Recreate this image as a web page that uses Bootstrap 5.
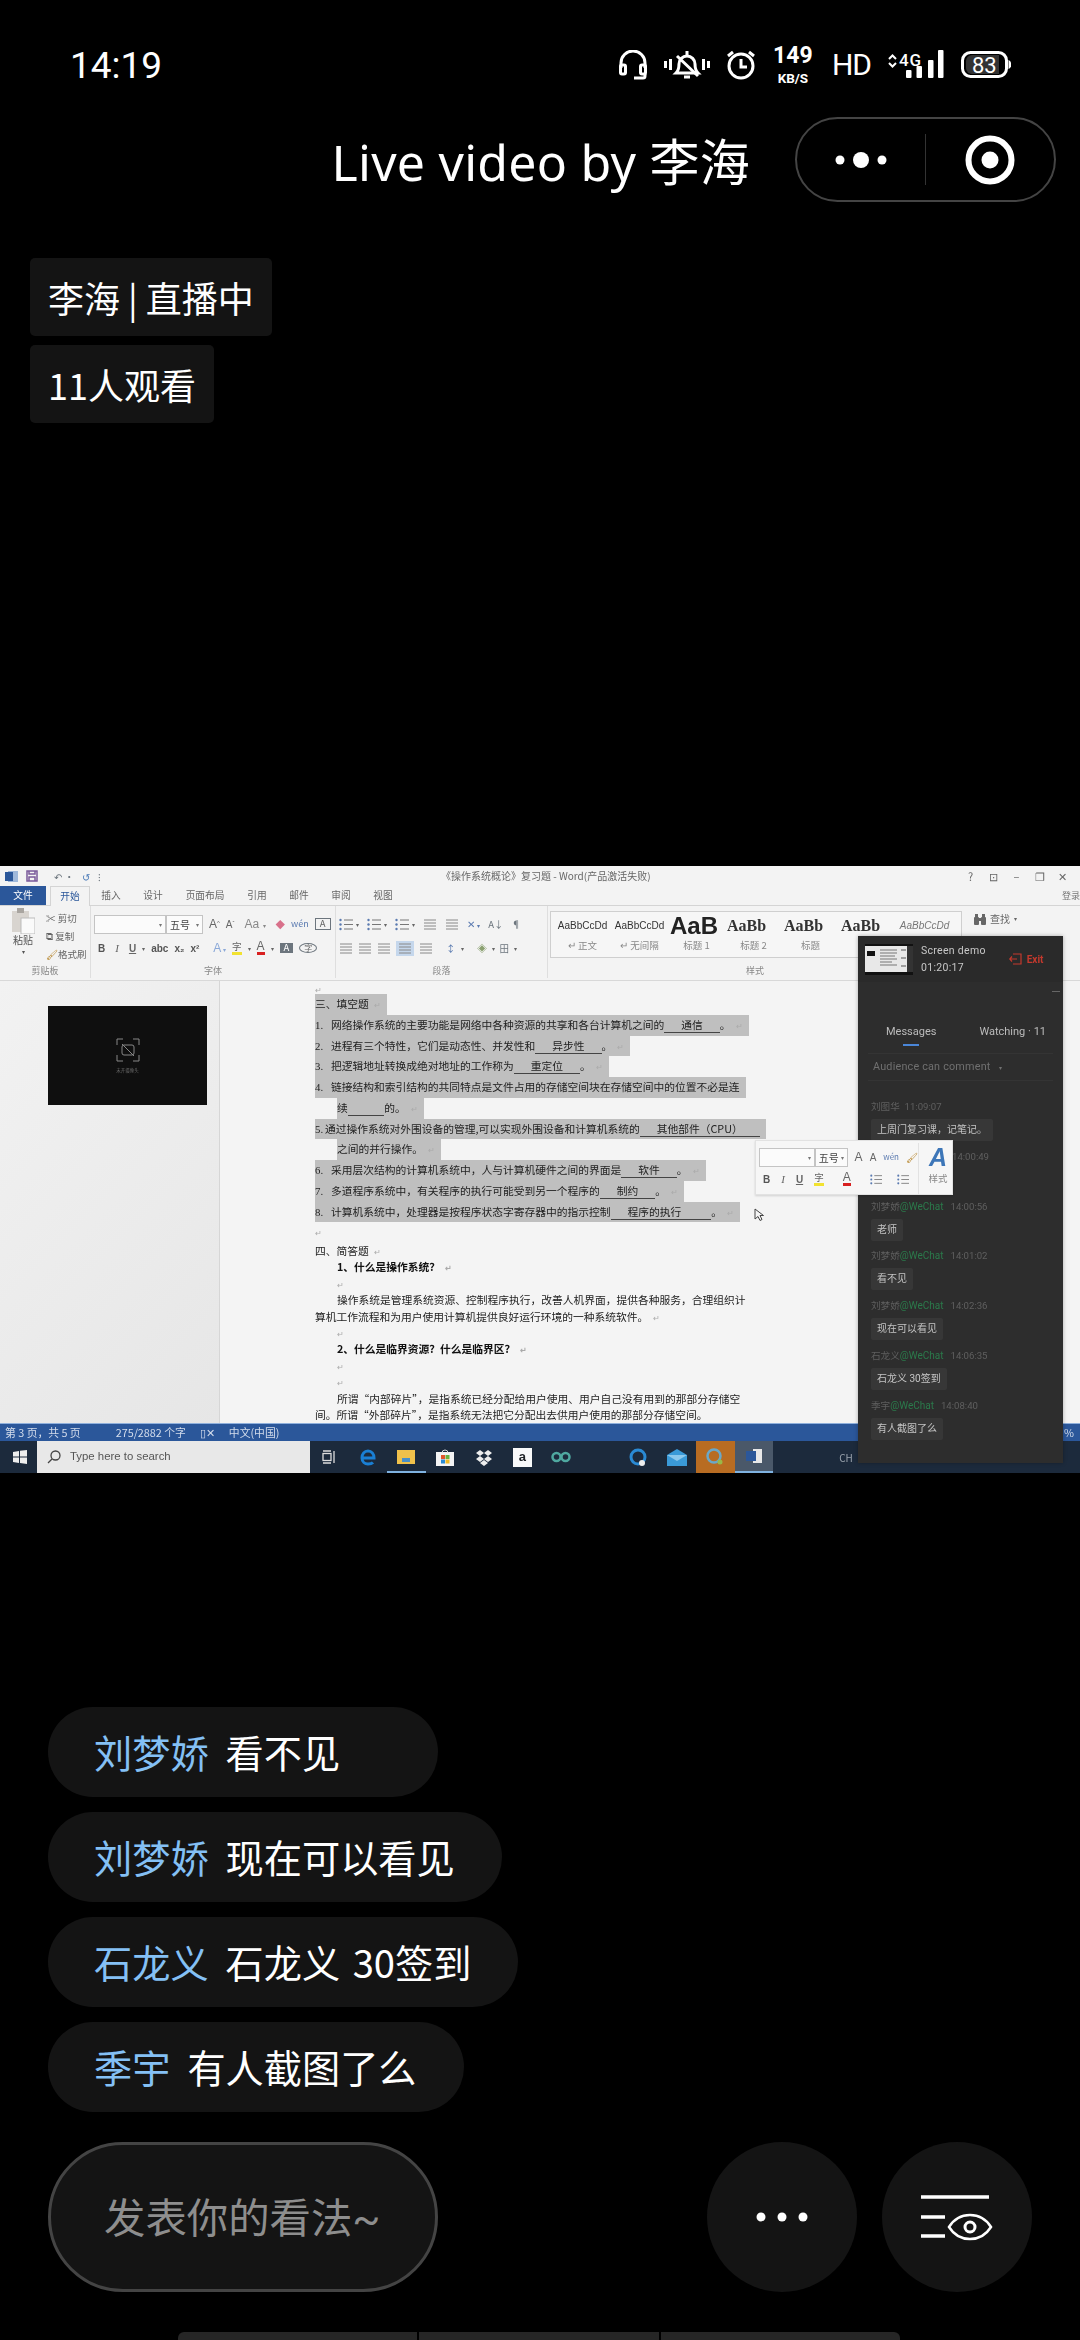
<!DOCTYPE html>
<html lang="zh">
<head>
  <meta charset="UTF-8">
  <title>Live video by 李海</title>
  <link rel="stylesheet" href="https://cdn.jsdelivr.net/npm/bootstrap@5.3.2/dist/css/bootstrap.min.css">
  <style>
    html, body { background: #000; margin: 0; width: 1080px; height: 2340px; overflow: hidden; }
    body { font-family: Roboto, "Noto Sans CJK SC", sans-serif; color: #fff; }
    .phone { width: 1080px; height: 2340px; overflow: hidden; background: #000; }

    /* status bar */
    .status-row { height: 90px; margin-top: 20px; padding: 0 69px 0 70px; }
    .clock-text { font-size: 37px; line-height: 1; }
    .stat-icons { gap: 17px; }
    .speed-box { width: 40px; line-height: 1; text-align: center; font-weight: 700; margin: 0 2px 0 1px; }
    .speed-num { font-size: 23px; }
    .speed-unit { font-size: 13.5px; margin-top: 5px; }
    .hd-text { font-size: 30px; line-height: 1; letter-spacing: -1px; }

    /* title */
    .title-row { height: 85px; margin-top: 7px; padding-right: 24px; }
    .page-title { font-family: "Noto Sans", "Noto Sans CJK SC", sans-serif; font-size: 50px; font-weight: 400; letter-spacing: .25px; margin: 0 45px 0 0; padding-top: 5px; line-height: 1; }
    .capsule { width: 261px; height: 85px; border: 2px solid #444; border-radius: 43px; }
    .capsule-sep { width: 1px; height: 51px; background: #333; }
    .capsule-cell { flex: 1 1 0; }

    /* live tags */
    .live-tags { margin: 56px 0 0 30px; gap: 9px; }
    .live-tag { height: 78px; padding: 0 18px; background: #141414; border-radius: 5px; font-size: 36px; font-family: "Noto Sans CJK SC", sans-serif; }

    /* shared video of a word window */
    .video-box { height: 607px; flex: none; margin-top: 443px; background: #f0f0f0; color: #333; filter: blur(.35px); overflow: hidden; font-family: "Noto Sans CJK SC", sans-serif; }
    .win-title { height: 20px; font-size: 10px; color: #666; padding: 0 5px; background: #f3f3f3; }
    .win-name { position: absolute; left: 441px; top: 0; line-height: 20px; white-space: nowrap; }
    .win-ctrl { gap: 10px; margin-left: auto; margin-right: 6px; font-size: 11px; }
    .win-ctrl span { width: 13px; text-align: center; }
    .tab-row { height: 20px; font-size: 9.7px; color: #666; border-bottom: 1px solid #d4d4d4; background: #f3f3f3; }
    .tab-file { width: 46px; background: #2b579a; color: #fff; }
    .tab-on { width: 40px; margin-left: 4px; height: 20px; background: #f3f3f3; border: 1px solid #d4d4d4; border-bottom: 0; color: #2b579a; }
    .tab-item { width: 42px; }
    .tab-wide { width: 62px; }
    .tab-login { margin-left: auto; font-size: 9px; color: #777; white-space: nowrap; }

    .ribbon { height: 75px; background: #f3f3f3; border-bottom: 1px solid #d8d8d8; font-size: 9.5px; color: #666; }
    .rb-group { flex: none; border-right: 1px solid #dedede; position: relative; height: 72px; padding-top: 2px; }
    .rb-label { position: absolute; left: 0; right: 0; bottom: 1px; text-align: center; font-size: 9px; line-height: 12px; color: #888; }
    .rb-clip { width: 91px; }
    .rb-font { width: 245px; }
    .rb-para { width: 212px; }
    .rb-style { width: 414px; border-right: 0; padding-left: 2px; }
    .rb-row { height: 24px; gap: 6px; padding-left: 3px; white-space: nowrap; }
    .fake-input { background: #fbfbfb; border: 1px solid #c4c4c4; height: 19px; font-size: 10px; color: #444; padding: 0 3px; }
    .fake-name { width: 72px; }
    .fake-size { width: 37px; margin-left: -6px; }
    .mini-caret { margin-left: auto; font-size: 6px; color: #777; }
    .paste-col { width: 30px; font-size: 10px; line-height: 12px; color: #555; }
    .cut-col { font-size: 9.5px; line-height: 18px; color: #666; margin-top: 1px; }
    .fmt-b { font-weight: 700; color: #555; font-family: "Liberation Sans", sans-serif; font-size: 10px; }
    .fmt-i { font-style: italic; font-family: "Liberation Serif", serif; font-size: 11px; }
    .fmt-u { text-decoration: underline; font-family: "Liberation Sans", sans-serif; font-weight: 700; font-size: 10px; }
    .fmt-big { font-size: 12px; font-family: "Liberation Sans", sans-serif; }
    .bar-yellow { border-bottom: 3px solid #f2e230; line-height: 11px; }
    .bar-red { border-bottom: 3px solid #d82020; line-height: 11px; }
    .para-on { background: #c5d7ec; padding: 1px 2px; }
    .style-gallery { width: 412px; height: 47px; margin-top: 3px; border: 1px solid #cfcfcf; background: #f6f6f6; padding: 0 12px 0 3px; }
    .style-cell { width: 57px; flex: none; overflow: hidden; text-align: center; }
    .style-sample { height: 27px; line-height: 27px; white-space: nowrap; font-family: "Liberation Sans", sans-serif; font-size: 10px; color: #333; }
    .style-h1 { width: 49px; overflow: hidden; font-size: 24px; font-weight: 700; color: #222; text-align: left; padding-left: 2px; }
    .style-h2 { width: 49px; overflow: hidden; font-size: 16px; font-weight: 700; font-family: "Liberation Serif", serif; color: #333; text-align: left; padding-left: 2px; }
    .style-em { font-style: italic; color: #777; }
    .style-name { font-size: 9.5px; line-height: 13px; color: #888; }
    .find-col { padding: 4px 0 0 12px; font-size: 10px; line-height: 18px; color: #666; }

    .work-area { height: 442px; }
    .nav-pane { width: 220px; flex: none; background: linear-gradient(135deg, #f2f2f2, #e6e6e6); border-right: 1px solid #d6d6d6; padding: 25px 0 0 48px; }
    .slide-thumb { width: 159px; height: 99px; background: #0f0f0f; color: #666; font-size: 4.5px; gap: 5px; }
    .doc-pane { flex: 1 1 auto; background: #f4f4f4; padding: 0 0 0 95px; overflow: hidden; font-size: 10.75px; color: #222; white-space: nowrap; }
    .doc-mark { height: 13px; }
    .doc-big { height: 20.75px; line-height: 20.75px; }
    .doc-small { height: 16.42px; line-height: 16.42px; }
    .sel { display: inline-block; height: 100%; background: #bfbfbf; padding-right: 6px; }
    .indent { margin-left: 22px; }
    .num { display: inline-block; width: 16px; font-family: "Liberation Serif", serif; }
    .num-tight { display: inline-block; width: 10px; font-family: "Liberation Serif", serif; }
    .blank { border-bottom: 1px solid #444; padding: 0 17px; }
    .blank-wide { padding: 0 30px 0 17px; }
    .para-mark { color: #aaa; font-size: 8px; margin-left: 5px; }
    .ink-bold { font-weight: 700; color: #111; }

    .word-status { height: 18px; background: #2b579a; color: #d4ddec; font-size: 10.8px; padding: 0 6px 0 5px; gap: 35px; border-top: 1px solid #8fb0dc; }
    .pct-text { margin-left: auto; }
    .task-bar { height: 32px; background: #1c2a3c; padding-left: 3px; }
    .win-start { width: 34px; flex: none; }
    .task-search { width: 273px; height: 32px; flex: none; background: #e8e8e8; color: #555; font-size: 11.4px; font-family: "Liberation Sans", sans-serif; padding-left: 10px; gap: 9px; }
    .task-cell { width: 38.6px; height: 32px; flex: none; }
    .task-open { border-bottom: 2px solid #7fb2e0; }
    .task-orange { background: #b86c22; }
    .task-word { background: #4a5869; }
    .task-right { color: #9aa3ad; font-size: 10px; padding-left: 66px; }

    /* floating comment panel over the video */
    .share-panel { position: absolute; left: 858px; top: 70px; width: 205px; height: 527px; background: #2d2d2d; color: #c8c8c8; font-size: 10px; font-family: Roboto, "Noto Sans CJK SC", sans-serif; box-shadow: 0 0 4px rgba(0,0,0,.3); }
    .panel-head { height: 46px; padding: 0 0 0 7px; background: #2a2a2a; gap: 8px; }
    .panel-info { font-size: 10.5px; line-height: 17px; letter-spacing: .3px; }
    .panel-exit { color: #c4392d; margin-left: 15px; gap: 5px; font-weight: 700; }
    .panel-dash { width: 8px; height: 1px; background: #666; margin: 9px 3px 0 auto; }
    .panel-tabs { margin-top: 32px; height: 20px; padding: 0 17px 0 28px; font-size: 11px; color: #bbb; justify-content: space-between; }
    .tab-mark::after { content: ""; display: block; width: 16px; height: 2px; background: #4a86d8; margin: 3px auto 0; }
    .panel-mode { height: 28px; margin: 9px 10px 0; border-top: 1px solid #343434; border-bottom: 1px solid #343434; color: #707070; font-size: 10.8px; padding-left: 5px; letter-spacing: .2px; }
    .chat-list { padding: 19px 0 0 13px; }
    .chat-item { height: 49.8px; }
    .chat-meta { line-height: 14px; font-size: 9.6px; color: #5f5f5f; white-space: nowrap; }
    .chat-src { color: #2b7a4b; margin-right: 7px; font-size: 10px; }
    .chat-hidden { padding-left: 81px; }
    .chat-bubble { height: 22px; line-height: 22px; margin-top: 5px; padding: 0 6px; background: #373737; color: #c4c4c4; border-radius: 2px; white-space: nowrap; }

    .mini-bar { position: absolute; left: 755px; top: 274px; width: 198px; height: 55px; background: #f6f6f6; border: 1px solid #e2e2e2; box-shadow: 0 1px 2px rgba(0,0,0,.15); color: #666; font-size: 9.5px; }
    .mini-left { width: 162px; padding: 5px 0 0 3px; }
    .mini-row { height: 22px; gap: 7px; }
    .mini-row-low { gap: 11px; }
    .mini-right { border-left: 1px solid #e2e2e2; margin-top: 2px; padding-left: 5px; flex: 1; font-size: 9.5px; color: #888; }
    .mini-a { color: #3d76b8; font-size: 25px; line-height: 28px; font-style: italic; font-weight: 700; font-family: "Liberation Sans", sans-serif; }
    .mouse-arrow { position: absolute; left: 754px; top: 342px; }

    /* comments */
    .comment-list { margin: 234px 0 0 48px; gap: 15px; font-family: "Noto Sans CJK SC", sans-serif; }
    .comment-pill { height: 90px; min-width: 390px; padding: 0 47px 0 46px; background: #141414; border-radius: 45px; font-size: 38.2px; gap: 17px; word-spacing: 4px; }
    .comment-name { color: #84c0f5; }

    /* bottom */
    .action-row { margin-top: 30px; padding: 0 48px; }
    .say-box { width: 390px; height: 150px; background: #141414; border: 3px solid #444; border-radius: 75px; padding: 5px 0 0 53px; color: #8e8e8e; font-size: 41.4px; font-family: Roboto, "Noto Sans CJK SC", sans-serif; }
    .round-btn { width: 150px; height: 150px; background: #141414; border-radius: 50%; }
    .round-gap { gap: 25px; margin-left: auto; }
    .home-bar { margin: 40px 180px 0 178px; height: 8px; gap: 2px; }
    .home-seg { flex: 1 1 0; background: #262626; }
    .home-seg:first-child { border-top-left-radius: 6px; }
    .home-seg:last-child { border-top-right-radius: 6px; }
  </style>
</head>
<body>
<div class="phone d-flex flex-column position-relative">

  <svg width="0" height="0" class="position-absolute">
    <symbol id="ic-list" viewBox="0 0 14 13"><g fill="none" stroke="#777"><path d="M5 2h9M5 6.500h9M5 11h9"/></g><g fill="#5a7ab0"><circle cx="1.500" cy="2" r="1.200"/><circle cx="1.500" cy="6.500" r="1.200"/><circle cx="1.500" cy="11" r="1.200"/></g></symbol>
    <symbol id="ic-lines" viewBox="0 0 14 13"><path d="M1 2h12M1 5h12M1 8h12M1 11h12" fill="none" stroke="#888"/></symbol>
  </svg>

  <!-- status bar -->
  <div class="status-row d-flex align-items-center justify-content-between">
    <span class="clock-text">14:19</span>
    <div class="stat-icons d-flex align-items-center">
      <svg width="28" height="30" viewBox="0 0 28 30" fill="none" stroke="#fff" stroke-width="3"><path d="M2 18V13a12 12 0 0 1 24 0v5"/><rect x="1.500" y="15" width="5" height="9" rx="1.500"/><rect x="21.500" y="15" width="5" height="9" rx="1.500"/><path d="M26 24v2a2 2 0 0 1-2 2H15"/></svg>
      <svg width="46" height="30" viewBox="0 0 46 30" fill="none" stroke="#fff" stroke-width="3"><path d="M1.500 11v7M6.500 9v11M39.500 9v11M44.500 11v7"/><path d="M12 23c2-2 3-4 3-9a8 8 0 0 1 16 0c0 5 1 7 3 9z"/><path d="M23 1v4M20 27h6M13 6l21 20"/></svg>
      <svg width="28" height="30" viewBox="0 0 28 30" fill="none" stroke="#fff" stroke-width="3"><circle cx="14" cy="16" r="12"/><path d="M14 9v8h6M1 6l5-4M27 6l-5-4"/></svg>
      <div class="speed-box"><div class="speed-num">149</div><div class="speed-unit">KB/S</div></div>
      <span class="hd-text">HD</span>
      <svg width="56" height="30" viewBox="0 0 56 30" fill="none"><path d="M1 9l3.500-3.500L8 9M1 13l3.500 3.500L8 13" stroke="#fff" stroke-width="2"/><text x="11" y="16" fill="#fff" font-family="Roboto" font-size="17" font-weight="500" textLength="22">4G</text><rect x="18" y="20" width="5.500" height="8" rx="1" fill="#fff"/><rect x="28.500" y="16" width="5.500" height="12" rx="1" fill="#fff"/><rect x="40" y="10" width="5.500" height="18" rx="1" fill="#fff"/><rect x="50" y="0" width="5.500" height="28" rx="1" fill="#fff"/></svg>
      <svg width="50" height="30" viewBox="0 0 50 30"><rect x="1.500" y="2.500" width="44" height="24" rx="8" fill="none" stroke="#fff" stroke-width="3"/><path d="M11 5h27v19H11a6 6 0 0 1-6-6v-7a6 6 0 0 1 6-6z" fill="#333"/><path d="M47.500 10a5 5 0 0 1 0 9z" fill="#fff"/><text x="11" y="23" fill="#fff" font-family="Roboto" font-size="22">83</text></svg>
    </div>
  </div>

  <!-- title and capsule -->
  <div class="title-row d-flex align-items-center justify-content-end">
    <h1 class="page-title">Live video by 李海</h1>
    <div class="capsule d-flex align-items-center">
      <div class="capsule-cell d-flex justify-content-center">
        <svg width="60" height="18" viewBox="0 0 60 18" fill="#fff"><circle cx="9" cy="9" r="4.500"/><circle cx="30" cy="9" r="8"/><circle cx="51" cy="9" r="4.500"/></svg>
      </div>
      <div class="capsule-sep"></div>
      <div class="capsule-cell d-flex justify-content-center">
        <svg width="50" height="50" viewBox="0 0 50 50"><circle cx="25" cy="25" r="21.500" fill="none" stroke="#fff" stroke-width="6"/><circle cx="25" cy="25" r="8.500" fill="#fff"/></svg>
      </div>
    </div>
  </div>

  <!-- live tags -->
  <div class="live-tags d-flex flex-column align-items-start">
    <div class="live-tag d-flex align-items-center">李海 | 直播中</div>
    <div class="live-tag d-flex align-items-center">11人观看</div>
  </div>

  <!-- shared screen -->
  <div class="video-box position-relative">
    <div class="win-title d-flex align-items-center gap-2 position-relative">
      <svg width="13" height="13" viewBox="0 0 13 13"><rect x="3" y="1" width="10" height="11" fill="#9fb8da"/><rect y="2" width="8" height="9" fill="#2b579a"/></svg>
      <svg width="12" height="12" viewBox="0 0 12 12" fill="none" stroke="#7a5a9a" stroke-width="1.500"><rect x="1" y="1" width="10" height="10"/><path d="M3 1v3h6V1M3 11V7h6v4"/></svg>
      <span class="text-secondary ms-2">↶ ·</span>
      <span style="color:#4a7ab8">↺</span>
      <span class="text-secondary">⁝</span>
      <span class="win-name">《操作系统概论》复习题 - Word(产品激活失败)</span>
      <div class="win-ctrl d-flex">
        <span>?</span><span>⊡</span><span>–</span><span>❐</span><span>✕</span>
      </div>
    </div>
    <div class="tab-row d-flex align-items-center">
      <div class="tab-file d-flex align-items-center justify-content-center h-100">文件</div>
      <div class="tab-on d-flex align-items-center justify-content-center">开始</div>
      <div class="tab-item text-center">插入</div>
      <div class="tab-item text-center">设计</div>
      <div class="tab-wide text-center">页面布局</div>
      <div class="tab-item text-center">引用</div>
      <div class="tab-item text-center">邮件</div>
      <div class="tab-item text-center">审阅</div>
      <div class="tab-item text-center">视图</div>
      <div class="tab-login">登录</div>
    </div>

    <div class="ribbon d-flex">
      <div class="rb-group rb-clip d-flex gap-2 ps-2">
        <div class="paste-col text-center">
          <svg width="24" height="26" viewBox="0 0 24 26"><rect x="1" y="3" width="17" height="21" fill="#d8d4cf"/><rect x="6" y="0" width="7" height="5" fill="#a9a5a0"/><rect x="10" y="10" width="14" height="16" fill="#fafafa" stroke="#bbb"/></svg>
          <div>粘贴</div><div style="font-size:6px">▾</div>
        </div>
        <div class="cut-col">
          <div>✂ 剪切</div><div>⧉ 复制</div><div><span style="color:#b98a35">🖌</span>格式刷</div>
        </div>
        <div class="rb-label">剪贴板</div>
      </div>

      <div class="rb-group rb-font">
        <div class="rb-row d-flex align-items-center mt-1">
          <div class="fake-input fake-name d-flex align-items-center"><span class="mini-caret">▾</span></div>
          <div class="fake-input fake-size d-flex align-items-center">五号<span class="mini-caret">▾</span></div>
          <span class="fmt-big">A<sup style="font-size:6px">^</sup></span>
          <span class="fmt-big" style="font-size:10px">A<sup style="font-size:6px">ˇ</sup></span>
          <span class="fmt-big ms-1" style="color:#888">Aa <small style="font-size:6px">▾</small></span>
          <span class="ms-1" style="color:#d8708a">◆</span>
          <span style="color:#5a7ab0;font-size:9px">wén</span>
          <span class="border border-secondary px-1 lh-1">A</span>
        </div>
        <div class="rb-row d-flex align-items-center">
          <span class="fmt-b ms-1">B</span><span class="fmt-i ms-1">I</span><span class="fmt-u ms-1">U</span>
          <span style="font-size:6px">▾</span><span class="fmt-b">abc</span><span class="fmt-b">x₂</span><span class="fmt-b">x²</span>
          <span class="fmt-big ms-2" style="color:#8aa8d8">A<small style="font-size:6px"> ▾</small></span>
          <span class="bar-yellow">字</span><span style="font-size:6px">▾</span>
          <span class="bar-red fmt-big">A</span><span style="font-size:6px">▾</span>
          <span class="bg-secondary text-white lh-1 px-1">A</span>
          <span class="border border-secondary rounded-circle lh-1 px-1" style="font-size:8px">字</span>
        </div>
        <div class="rb-label">字体</div>
      </div>

      <div class="rb-group rb-para">
        <div class="rb-row d-flex align-items-center mt-1" style="gap:8px">
          <svg width="14" height="13"><use href="#ic-list"/></svg><span style="font-size:6px;margin-left:-5px">▾</span>
          <svg width="14" height="13"><use href="#ic-list"/></svg><span style="font-size:6px;margin-left:-5px">▾</span>
          <svg width="14" height="13"><use href="#ic-list"/></svg><span style="font-size:6px;margin-left:-5px">▾</span>
          <svg width="14" height="13"><use href="#ic-lines"/></svg>
          <svg width="14" height="13"><use href="#ic-lines"/></svg>
          <span style="color:#5a7ab0">✕ <small style="font-size:6px">▾</small></span>
          <span class="text-secondary">A↓</span>
          <span class="text-secondary">¶</span>
        </div>
        <div class="rb-row d-flex align-items-center" style="gap:5px">
          <svg width="14" height="13"><use href="#ic-lines"/></svg>
          <svg width="14" height="13"><use href="#ic-lines"/></svg>
          <svg width="14" height="13"><use href="#ic-lines"/></svg>
          <span class="para-on d-flex"><svg width="14" height="13"><use href="#ic-lines"/></svg></span>
          <svg width="14" height="13"><use href="#ic-lines"/></svg>
          <span class="ms-2" style="color:#5a7ab0">↕</span><span style="font-size:6px">▾</span>
          <span class="ms-2" style="color:#8aa070">◈</span><span style="font-size:6px">▾</span>
          <span class="text-secondary">田</span><span style="font-size:6px">▾</span>
        </div>
        <div class="rb-label">段落</div>
      </div>

      <div class="rb-group rb-style">
        <div class="style-gallery d-flex">
          <div class="style-cell"><div class="style-sample">AaBbCcDd</div><div class="style-name">↵ 正文</div></div>
          <div class="style-cell"><div class="style-sample">AaBbCcDd</div><div class="style-name">↵ 无间隔</div></div>
          <div class="style-cell"><div class="style-sample style-h1">AaB</div><div class="style-name">标题 1</div></div>
          <div class="style-cell"><div class="style-sample style-h2">AaBb</div><div class="style-name">标题 2</div></div>
          <div class="style-cell"><div class="style-sample style-h2">AaBb</div><div class="style-name">标题</div></div>
          <div class="style-cell"><div class="style-sample style-h2">AaBb</div></div>
          <div class="style-cell"><div class="style-sample style-em">AaBbCcDd</div></div>
        </div>
        <div class="rb-label">样式</div>
      </div>

      <div class="find-col">
        <div class="d-flex align-items-center gap-1"><svg width="12" height="11" viewBox="0 0 12 11" fill="#666"><rect y="3" width="5" height="8" rx="1"/><rect x="7" y="3" width="5" height="8" rx="1"/><rect x="1" width="3" height="4"/><rect x="8" width="3" height="4"/><rect x="4" y="4" width="4" height="3"/></svg><span>查找</span><small style="font-size:6px">▾</small></div>
      </div>
    </div>

    <div class="work-area d-flex">
      <div class="nav-pane">
        <div class="slide-thumb d-flex flex-column align-items-center justify-content-center">
          <svg width="24" height="24" viewBox="0 0 24 24" fill="none" stroke="#888"><path d="M1 7V1h6M17 1h6v6M23 17v6h-6M7 23H1v-6"/><rect x="6" y="7" width="12" height="10" rx="2"/><path d="M6 6l12 12"/></svg>
          <span>未开摄像头</span>
        </div>
      </div>
      <div class="doc-pane">
        <div class="doc-mark"><span class="para-mark ms-0">↵</span></div>
        <div class="doc-big"><span class="sel">三、填空题<span class="para-mark">↵</span></span></div>
        <div class="doc-big"><span class="sel"><span class="num">1.</span>网络操作系统的主要功能是网络中各种资源的共享和各台计算机之间的<span class="blank">通信</span>。<span class="para-mark">↵</span></span></div>
        <div class="doc-big"><span class="sel"><span class="num">2.</span>进程有三个特性&#xFF0C;它们是动态性、并发性和<span class="blank">异步性</span>。<span class="para-mark">↵</span></span></div>
        <div class="doc-big"><span class="sel"><span class="num">3.</span>把逻辑地址转换成绝对地址的工作称为<span class="blank">重定位</span>。<span class="para-mark">↵</span></span></div>
        <div class="doc-big"><span class="sel"><span class="num">4.</span>链接结构和索引结构的共同特点是文件占用的存储空间块在存储空间中的位置不必是连</span></div>
        <div class="doc-big"><span class="sel indent">续<span class="blank">&nbsp;</span>的。<span class="para-mark">↵</span></span></div>
        <div class="doc-big"><span class="sel"><span class="num-tight">5.</span>通过操作系统对外围设备的管理,可以实现外围设备和计算机系统的<span class="blank">其他部件&#xFF08;CPU&#xFF09;</span></span></div>
        <div class="doc-big"><span class="sel indent">之间的并行操作。<span class="para-mark">↵</span></span></div>
        <div class="doc-big"><span class="sel"><span class="num">6.</span>采用层次结构的计算机系统中&#xFF0C;人与计算机硬件之间的界面是<span class="blank">软件</span>。<span class="para-mark">↵</span></span></div>
        <div class="doc-big"><span class="sel"><span class="num">7.</span>多道程序系统中&#xFF0C;有关程序的执行可能受到另一个程序的<span class="blank">制约</span>。<span class="para-mark">↵</span></span></div>
        <div class="doc-big"><span class="sel"><span class="num">8.</span>计算机系统中&#xFF0C;处理器是按程序状态字寄存器中的指示控制<span class="blank blank-wide">程序的执行</span>。<span class="para-mark">↵</span></span></div>
        <div class="doc-big"><span class="para-mark ms-0">↵</span></div>
        <div class="doc-small">四、简答题<span class="para-mark">↵</span></div>
        <div class="doc-small indent ink-bold">1、什么是操作系统&#xFF1F;<span class="para-mark">↵</span></div>
        <div class="doc-small indent"><span class="para-mark ms-0">↵</span></div>
        <div class="doc-small indent">操作系统是管理系统资源、控制程序执行&#xFF0C;改善人机界面&#xFF0C;提供各种服务&#xFF0C;合理组织计</div>
        <div class="doc-small">算机工作流程和为用户使用计算机提供良好运行环境的一种系统软件。<span class="para-mark">↵</span></div>
        <div class="doc-small indent"><span class="para-mark ms-0">↵</span></div>
        <div class="doc-small indent ink-bold">2、什么是临界资源&#xFF1F;什么是临界区&#xFF1F;<span class="para-mark">↵</span></div>
        <div class="doc-small indent"><span class="para-mark ms-0">↵</span></div>
        <div class="doc-small indent"><span class="para-mark ms-0">↵</span></div>
        <div class="doc-small indent">所谓“内部碎片”&#xFF0C;是指系统已经分配给用户使用、用户自己没有用到的那部分存储空</div>
        <div class="doc-small">间。所谓“外部碎片”&#xFF0C;是指系统无法把它分配出去供用户使用的那部分存储空间。</div>
      </div>
    </div>

    <div class="word-status d-flex align-items-center">
      <span>第 3 页&#xFF0C;共 5 页</span>
      <span>275/2882 个字</span>
      <span style="margin-left:-21px">▯✕</span>
      <span style="margin-left:-21px">中文(中国)</span>
      <span class="pct-text">%</span>
    </div>

    <div class="task-bar d-flex align-items-center">
      <div class="win-start d-flex justify-content-center">
        <svg width="14" height="14" viewBox="0 0 14 14" fill="#eee"><path d="M0 2l6-1v5.500H0zM7 .8L14 0v6.500H7zM0 7.500h6V13l-6-1zM7 7.500h7V14l-7-1z"/></svg>
      </div>
      <div class="task-search d-flex align-items-center">
        <svg width="14" height="14" viewBox="0 0 14 14" fill="none" stroke="#444" stroke-width="1.300"><circle cx="8.500" cy="5.500" r="4.500"/><path d="M5 9l-4 4"/></svg>
        <span>Type here to search</span>
      </div>
      <div class="task-cell d-flex align-items-center justify-content-center"><svg width="14" height="14" fill="none" stroke="#ddd" stroke-width="1.300"><rect x="1" y="3.500" width="8" height="7"/><path d="M1 1h8M1 13h8M12 1v12"/></svg></div>
      <div class="task-cell d-flex align-items-center justify-content-center"><svg width="16" height="17" viewBox="0 0 16 17" fill="none" stroke="#1a7fd4" stroke-width="3"><path d="M2 9h12c0-4-2.500-7-6-7S2 5 2 9c0 4 3 6 6 6 2 0 4-.5 5-1.500"/></svg></div>
      <div class="task-cell task-open d-flex align-items-center justify-content-center"><svg width="18" height="15"><rect y="1" width="18" height="14" fill="#f0c14b"/><rect x="5" y="9" width="8" height="4" fill="#4a90c8"/></svg></div>
      <div class="task-cell d-flex align-items-center justify-content-center"><svg width="18" height="18"><rect y="4" width="18" height="14" fill="#f4f4f4"/><path d="M6 5a3 3 0 0 1 6 0" fill="none" stroke="#ddd"/><rect x="5" y="7" width="4" height="4" fill="#e2552b"/><rect x="9.500" y="7" width="4" height="4" fill="#6cb33e"/><rect x="5" y="11.500" width="4" height="4" fill="#2a8ad4"/><rect x="9.500" y="11.500" width="4" height="4" fill="#f0b923"/></svg></div>
      <div class="task-cell d-flex align-items-center justify-content-center"><svg width="18" height="17" viewBox="0 0 18 17" fill="#eee"><path d="M5 1l4 3-4 3-4-3zM13 1l4 3-4 3-4-3zM5 7l4 3-4 3-4-3zM13 7l4 3-4 3-4-3zM5 14l4-3 4 3-4 3z"/></svg></div>
      <div class="task-cell d-flex align-items-center justify-content-center"><span class="bg-light text-dark d-flex align-items-center justify-content-center fw-bold" style="width:19px;height:19px;font-size:13px;font-family:'Liberation Sans'">a</span></div>
      <div class="task-cell d-flex align-items-center justify-content-center"><svg width="20" height="12" fill="none" stroke="#4fa8a0" stroke-width="2.500"><circle cx="5.500" cy="6" r="4"/><circle cx="14.500" cy="6" r="4"/></svg></div>
      <div class="task-cell"></div>
      <div class="task-cell d-flex align-items-center justify-content-center"><svg width="18" height="19" fill="none" stroke="#2a8ad4" stroke-width="3"><circle cx="9" cy="9" r="7"/><circle cx="13" cy="15" r="3" fill="#eee" stroke="none"/></svg></div>
      <div class="task-cell d-flex align-items-center justify-content-center"><svg width="20" height="17" viewBox="0 0 20 17"><path d="M0 6l10-6 10 6v11H0z" fill="#3a9ad8"/><path d="M0 6l10 6 10-6" fill="#8cc8ec"/></svg></div>
      <div class="task-cell task-orange d-flex align-items-center justify-content-center"><svg width="20" height="20" fill="none" stroke-width="2.500"><circle cx="9" cy="9" r="6.500" stroke="#6aa8c8"/><circle cx="15" cy="15" r="2.500" fill="#9ab848"/></svg></div>
      <div class="task-cell task-word task-open d-flex align-items-center justify-content-center"><svg width="16" height="14"><rect x="7" width="9" height="14" fill="#e8e8e8"/><rect y="2" width="10" height="10" fill="#2b579a"/></svg></div>
      <div class="task-right">CH</div>
    </div>

    <!-- screen share panel -->
    <div class="share-panel">
      <div class="panel-head d-flex align-items-center">
        <svg width="48" height="31" viewBox="0 0 48 31"><rect width="48" height="31" fill="#e8e8e8"/><rect width="48" height="2" fill="#111"/><rect y="28" width="48" height="3" fill="#111"/><rect x="2" y="7" width="8" height="5" fill="#111"/><path d="M15 6h17M15 9h17M15 12h15M15 15h17M15 18h12M15 21h17" stroke="#777"/><path d="M36 6h5M36 14h5M36 22h5" stroke="#555"/><rect x="42" y="2" width="6" height="26" fill="#333"/></svg>
        <div class="panel-info"><div>Screen demo</div><div>01:20:17</div></div>
        <div class="panel-exit d-flex align-items-center">
          <svg width="13" height="12" viewBox="0 0 13 12" fill="none" stroke="#c4392d" stroke-width="1.200"><path d="M4 1h8v10H4M8 6H1M3 3.500L.8 6 3 8.500"/></svg>
          <span>Exit</span>
        </div>
      </div>
      <div class="panel-dash"></div>
      <div class="panel-tabs d-flex">
        <span class="tab-mark">Messages</span>
        <span>Watching · 11</span>
      </div>
      <div class="panel-mode d-flex align-items-center">Audience can comment <small class="ms-2" style="font-size:6px">▾</small></div>
      <div class="chat-list">
        <div class="chat-item d-flex flex-column align-items-start">
          <div class="chat-meta">刘图华 &nbsp;11:09:07</div>
          <div class="chat-bubble">上周门复习课&#xFF0C;记笔记。</div>
        </div>
        <div class="chat-item d-flex flex-column align-items-start">
          <div class="chat-meta chat-hidden">14:00:49</div>
        </div>
        <div class="chat-item d-flex flex-column align-items-start">
          <div class="chat-meta">刘梦娇<span class="chat-src">@WeChat</span>14:00:56</div>
          <div class="chat-bubble">老师</div>
        </div>
        <div class="chat-item d-flex flex-column align-items-start">
          <div class="chat-meta">刘梦娇<span class="chat-src">@WeChat</span>14:01:02</div>
          <div class="chat-bubble">看不见</div>
        </div>
        <div class="chat-item d-flex flex-column align-items-start">
          <div class="chat-meta">刘梦娇<span class="chat-src">@WeChat</span>14:02:36</div>
          <div class="chat-bubble">现在可以看见</div>
        </div>
        <div class="chat-item d-flex flex-column align-items-start">
          <div class="chat-meta">石龙义<span class="chat-src">@WeChat</span>14:06:35</div>
          <div class="chat-bubble">石龙义 30签到</div>
        </div>
        <div class="chat-item d-flex flex-column align-items-start">
          <div class="chat-meta">季宇<span class="chat-src">@WeChat</span>14:08:40</div>
          <div class="chat-bubble">有人截图了么</div>
        </div>
      </div>
    </div>

    <!-- floating mini toolbar -->
    <div class="mini-bar d-flex">
      <div class="mini-left">
        <div class="mini-row d-flex align-items-center">
          <div class="fake-input d-flex align-items-center" style="width:56px"><span class="mini-caret">▾</span></div>
          <div class="fake-input fake-size d-flex align-items-center" style="margin-left:-7px;width:33px">五号<span class="mini-caret">▾</span></div>
          <span class="fmt-big">A</span><span class="fmt-big" style="font-size:10px">A</span>
          <span style="color:#5a7ab0;font-size:8px">wén</span><span style="color:#b98a35">🖌</span>
        </div>
        <div class="mini-row mini-row-low d-flex align-items-center ps-1">
          <span class="fmt-b">B</span><span class="fmt-i">I</span><span class="fmt-u">U</span>
          <span class="bar-yellow">字</span>
          <span class="bar-red fmt-big ms-2">A</span>
          <svg class="ms-2" width="12" height="13"><use href="#ic-list"/></svg>
          <svg class="ms-1" width="12" height="13"><use href="#ic-list"/></svg>
        </div>
      </div>
      <div class="mini-right text-center">
        <div class="mini-a">A</div>
        <div>样式</div>
      </div>
    </div>

    <svg class="mouse-arrow" width="11" height="14" viewBox="0 0 11 14" fill="#f4f4f4" stroke="#444"><path d="M1 1v10l3-2.500 2 4 2-1-2-4h3.500z"/></svg>
  </div>

  <!-- comments -->
  <div class="comment-list d-flex flex-column align-items-start">
    <div class="comment-pill d-flex align-items-center"><span class="comment-name">刘梦娇</span><span>看不见</span></div>
    <div class="comment-pill d-flex align-items-center"><span class="comment-name">刘梦娇</span><span>现在可以看见</span></div>
    <div class="comment-pill d-flex align-items-center"><span class="comment-name">石龙义</span><span>石龙义 30签到</span></div>
    <div class="comment-pill d-flex align-items-center"><span class="comment-name">季宇</span><span>有人截图了么</span></div>
  </div>

  <!-- bottom actions -->
  <div class="action-row d-flex align-items-center">
    <div class="say-box d-flex align-items-center">发表你的看法~</div>
    <div class="round-gap d-flex">
      <div class="round-btn d-flex align-items-center justify-content-center">
        <svg width="52" height="10" viewBox="0 0 52 10" fill="#fff"><circle cx="5" cy="5" r="4.500"/><circle cx="26" cy="5" r="4.500"/><circle cx="47" cy="5" r="4.500"/></svg>
      </div>
      <div class="round-btn d-flex align-items-center justify-content-center">
        <svg width="74" height="52" viewBox="0 0 74 52" fill="none" stroke="#fff" stroke-width="3.500"><path d="M1 6h68M1 26h24M1 45h24"/><path d="M29 36c5-8 12-12 21-12s16 4 21 12c-5 8-12 12-21 12s-16-4-21-12z" stroke-width="2.500"/><circle cx="50" cy="36" r="5" stroke-width="3"/></svg>
      </div>
    </div>
  </div>

  <div class="home-bar d-flex">
    <div class="home-seg"></div><div class="home-seg"></div><div class="home-seg"></div>
  </div>
</div>
<script src="https://cdn.jsdelivr.net/npm/bootstrap@5.3.2/dist/js/bootstrap.bundle.min.js"></script>
</body>
</html>
